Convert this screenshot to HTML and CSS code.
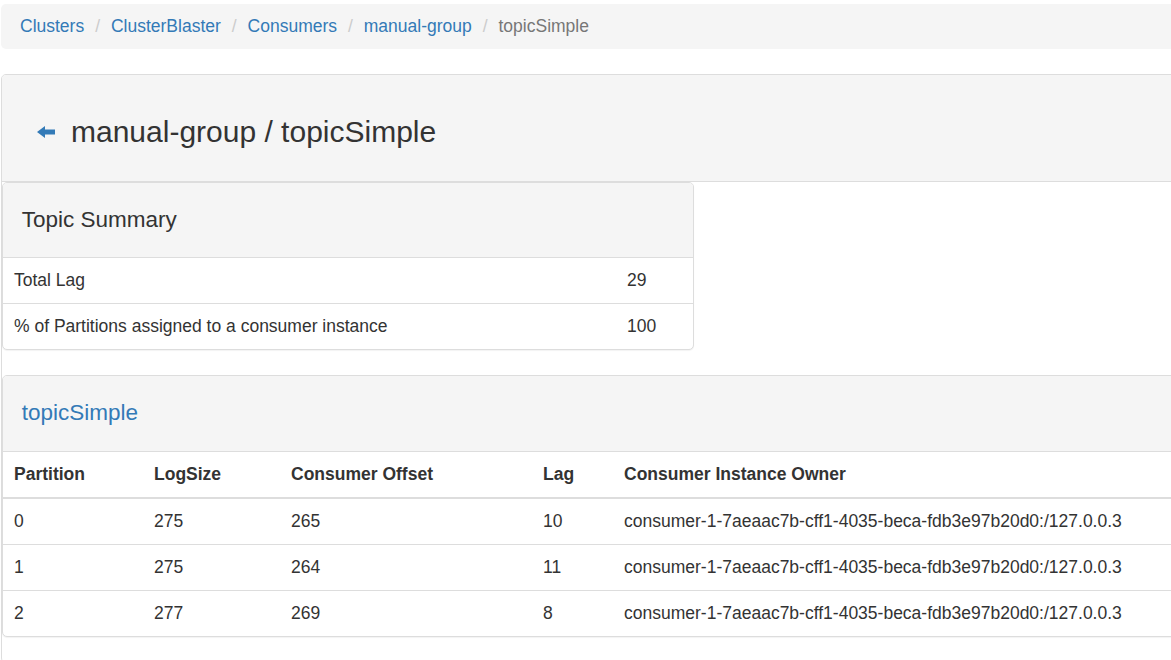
FILE: index.html
```html
<!DOCTYPE html>
<html>
<head>
<meta charset="utf-8">
<link rel="stylesheet" href="styles.css">
</head>
<body>
<div class="page">
  <ol class="breadcrumb">
    <li><a href="#">Clusters</a></li>
    <li><a href="#">ClusterBlaster</a></li>
    <li><a href="#">Consumers</a></li>
    <li><a href="#">manual-group</a></li>
    <li class="active">topicSimple</li>
  </ol>

  <div class="panel outer">
    <div class="panel-heading main-heading">
      <h3 class="main-title">
        <a href="#" class="back"><svg width="18" height="12" viewBox="0 0 18 12"><polygon points="0,6 8,0 8,3.5 18,3.5 18,8.5 8,8.5 8,12" fill="#337ab7"/></svg></a>
        <span>manual-group / topicSimple</span>
      </h3>
    </div>
    <div class="panel-body">
      <div class="summary-col">
        <div class="panel inner">
          <div class="panel-heading"><h4 class="panel-title">Topic Summary</h4></div>
          <table class="table">
            <tbody>
              <tr><td>Total Lag</td><td class="val">29</td></tr>
              <tr><td>% of Partitions assigned to a consumer instance</td><td class="val">100</td></tr>
            </tbody>
          </table>
        </div>
      </div>

      <div class="panel inner wide">
        <div class="panel-heading wide-heading"><h4 class="panel-title"><a href="#">topicSimple</a></h4></div>
        <table class="table parts">
          <thead>
            <tr>
              <th class="c1">Partition</th>
              <th class="c2">LogSize</th>
              <th class="c3">Consumer Offset</th>
              <th class="c4">Lag</th>
              <th>Consumer Instance Owner</th>
            </tr>
          </thead>
          <tbody>
            <tr><td>0</td><td>275</td><td>265</td><td>10</td><td>consumer-1-7aeaac7b-cff1-4035-beca-fdb3e97b20d0:/127.0.0.3</td></tr>
            <tr><td>1</td><td>275</td><td>264</td><td>11</td><td>consumer-1-7aeaac7b-cff1-4035-beca-fdb3e97b20d0:/127.0.0.3</td></tr>
            <tr><td>2</td><td>277</td><td>269</td><td>8</td><td>consumer-1-7aeaac7b-cff1-4035-beca-fdb3e97b20d0:/127.0.0.3</td></tr>
          </tbody>
        </table>
      </div>
    </div>
  </div>
</div>
</body>
</html>
```

FILE: styles.css
```css
html, body {
  overflow: hidden;
}
body {
  margin: 4px 0 0 1px;
  font-family: "Liberation Sans", Arial, sans-serif;
  font-size: 17.5px;
  line-height: 25px;
  color: #333;
  background: #fff;
}
.page {
  width: 1220px;
}
a {
  color: #337ab7;
  text-decoration: none;
}
.breadcrumb {
  list-style: none;
  margin: 0 0 25px 0;
  padding: 10px 19px;
  background: #f5f5f5;
  border-radius: 5px;
  display: flex;
}
.breadcrumb li + li {
  margin-left: 5px;
}
.breadcrumb li + li::before {
  content: "/\00a0";
  padding: 0 6px;
  color: #ccc;
}
.breadcrumb .active {
  color: #777;
}
.panel {
  background: #fff;
  border: 1px solid #ddd;
  border-radius: 5px;
  box-shadow: 0 1px 1px rgba(0,0,0,.05);
  margin-bottom: 25px;
}
.panel-heading {
  background: #f5f5f5;
  border-bottom: 1px solid #ddd;
  border-radius: 4px 4px 0 0;
  padding: 12.5px 18.75px;
}
.wide-heading {
  padding-bottom: 13.5px;
}
.main-heading {
  padding: 40px 18px 33px 35px;
}
.main-title {
  margin: 0;
  font-size: 30px;
  line-height: 33px;
  font-weight: 500;
  display: flex;
  align-items: center;
  gap: 16px;
}
.back {
  display: flex;
  align-items: center;
  margin-top: 1px;
}
.panel-body {
  padding: 0;
}
.summary-col {
  width: 692px;
}
.panel-title {
  margin: 12.5px 0;
  font-size: 22.5px;
  line-height: 24px;
  font-weight: 500;
}
.table {
  width: 100%;
  border-collapse: collapse;
  border-spacing: 0;
}
.table td, .table th {
  padding: 10px 10px 10px 11px;
  text-align: left;
  vertical-align: top;
  border-top: 1px solid #ddd;
}
.table tbody tr:first-child td {
  border-top: 0;
}
.table th {
  font-weight: bold;
  border-top: 0;
  border-bottom: 2px solid #ddd;
  vertical-align: bottom;
}
.val {
  width: 56px;
}
.c1 { width: 119px; }
.c2 { width: 116px; }
.c3 { width: 231px; }
.c4 { width: 60px; }
```
